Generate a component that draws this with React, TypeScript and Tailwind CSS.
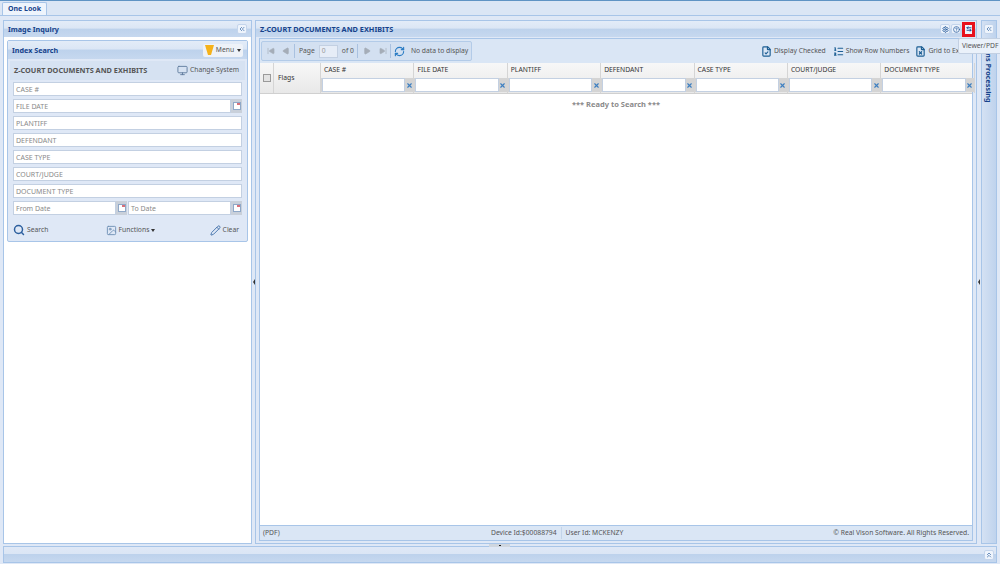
import { ReactNode } from 'react'
import { ChevronsLeft, ChevronsUp, RefreshCw, Search, Pencil, SkipBack, SkipForward, Play, HelpCircle, Settings, ArrowLeftRight, X, ListOrdered, FileCheck, FileX, Monitor, Image } from 'lucide-react'

const headerBar = 'bg-[linear-gradient(#e3ecf8_0%,#dbe6f5_45%,#bdd2ec_50%,#c6d8ef_100%)]'

const columns = ['CASE #', 'FILE DATE', 'PLANTIFF', 'DEFENDANT', 'CASE TYPE', 'COURT/JUDGE', 'DOCUMENT TYPE']
const fields = ['DEFENDANT', 'CASE TYPE', 'COURT/JUDGE', 'DOCUMENT TYPE']

function ToolBtn({ children }: { children: ReactNode }) {
  return (
    <span className="flex h-[10px] w-[10px] items-center justify-center rounded-[2px] border border-[#c4d5ec] bg-[#eef4fc] text-[#2c5f9e]">
      {children}
    </span>
  )
}

function DateBtn() {
  return (
    <span className="flex h-[14px] w-[11px] shrink-0 items-center justify-center bg-[#c9d0da]">
      <span className="relative h-[8px] w-[8px] border border-[#8fa8c8] bg-white">
        <span className="absolute right-0 top-0 h-[2px] w-[3px] bg-[#d8707a]" />
      </span>
    </span>
  )
}

function Field({ label, date, className = '' }: { label: string; date?: boolean; className?: string }) {
  return (
    <div className={`flex h-[14px] items-stretch ${className}`}>
      <div className="flex min-w-0 flex-1 items-center border border-[#c3d0e2] bg-white pl-[2px] text-[7px] leading-none text-[#8a8a8a]">
        {label}
      </div>
      {date && <DateBtn />}
    </div>
  )
}

function Separator({ className = 'mx-[3px]' }: { className?: string }) {
  return <span className={`h-[14px] w-px shrink-0 bg-[#a9c1e0] ${className}`} />
}

export default function App() {
  return (
    <div className="relative flex h-[564px] w-[1000px] flex-col overflow-hidden whitespace-nowrap bg-[#dfe8f6] font-['Noto_Sans',sans-serif] text-[6.75px] text-[#555]">
      {/* Tabs */}
      <div className="flex h-[16px] shrink-0 items-end border-t border-t-[#5f93c4] border-b border-b-[#a8c5e8] bg-[#dbe6f5] pl-[2px]">
        <div className="flex h-[13px] w-[45px] items-center justify-center rounded-t-[2px] border border-b-0 border-[#a8c5e8] bg-[#eef4fc] text-[7px] font-bold text-[#15428b]">
          One Look
        </div>
      </div>

      {/* Main area */}
      <div className="flex h-[530px] shrink-0 bg-[#dfe8f6] pt-[4px] pl-[3px] pr-[3px] pb-[2px]">
        {/* Left panel */}
        <section className="flex w-[249px] shrink-0 flex-col border border-[#a8c5e8] bg-white">
          <div className={`flex h-[16px] shrink-0 items-center justify-between pl-[4px] pr-[4px] text-[7.2px] font-bold text-[#15428b] ${headerBar}`}>
            <span>Image Inquiry</span>
            <ToolBtn><ChevronsLeft size={8} strokeWidth={2} /></ToolBtn>
          </div>
          <div className="px-[3px] pt-[3px]">
            <div className="rounded-[2px] border border-[#a8c5e8] bg-[#dfe8f6]">
              <div className={`flex h-[18px] items-center justify-between pl-[4px] pr-[4px] text-[7.2px] font-bold text-[#15428b] ${headerBar}`}>
                <span>Index Search</span>
                <span className="flex h-[13px] w-[40px] items-center justify-center gap-[2px] rounded-[2px] bg-[#eef2f8] text-[6.75px] font-normal text-[#555]">
                  <svg width="9" height="11" viewBox="0 0 9 11"><path d="M0 0h9L6 10H3z" fill="#f5b21a" /></svg>
                  Menu
                  <span className="ml-[1px] border-x-[2px] border-t-[3px] border-x-transparent border-t-[#333]" />
                </span>
              </div>
              <div className="mx-[2px] mt-[2px] flex h-[19px] items-center justify-between bg-[#d6e2f2] pl-[4px] pr-[6px]">
                <span className="text-[7.3px] font-bold text-[#555]">Z-COURT DOCUMENTS AND EXHIBITS</span>
                <span className="flex items-center gap-[2px]">
                  <Monitor size={11} className="text-[#5f7c9e]" />
                  Change System
                </span>
              </div>
              <div className="flex flex-col gap-[3px] px-[5px] pt-[2px]">
                <Field label="CASE #" />
                <Field label="FILE DATE" date />
                <Field label="PLANTIFF" />
                {fields.map((f) => (
                  <Field key={f} label={f} />
                ))}
                <div className="flex gap-[1px]">
                  <Field label="From Date" date className="w-[114px]" />
                  <Field label="To Date" date className="flex-1" />
                </div>
              </div>
              <div className="mt-[4px] flex h-[22px] items-center justify-between pl-[5px] pr-[8px]">
                <span className="flex items-center gap-[2px]">
                  <Search size={12} strokeWidth={3} className="text-[#2c5f9e]" />
                  Search
                </span>
                <span className="ml-[3px] flex items-center gap-[2px]">
                  <Image size={11} className="text-[#6f8fb5]" />
                  Functions
                  <span className="border-x-[2px] border-t-[3px] border-x-transparent border-t-[#333]" />
                </span>
                <span className="flex items-center gap-[2px]">
                  <Pencil size={11} className="text-[#3f6ea8]" />
                  Clear
                </span>
              </div>
            </div>
          </div>
        </section>

        {/* Splitter */}
        <div className="flex w-[3px] shrink-0 items-center justify-center">
          <span className="border-y-[3px] border-r-[2px] border-y-transparent border-r-[#333]" />
        </div>

        {/* Grid panel */}
        <section className="flex w-[722px] shrink-0 flex-col border border-[#a8c5e8] bg-[#dfe8f6]">
          <div className={`flex h-[16px] shrink-0 items-center justify-between pl-[4px] pr-px text-[7.3px] font-bold text-[#15428b] ${headerBar}`}>
            <span>Z-COURT DOCUMENTS AND EXHIBITS</span>
            <span className="flex items-center">
              <ToolBtn><Settings size={7} strokeWidth={3} /></ToolBtn>
              <span className="ml-[1px]"><ToolBtn><HelpCircle size={7} strokeWidth={2.5} /></ToolBtn></span>
              <span className="ml-[1px] flex h-[15px] w-[13px] items-center justify-center border-[3px] border-[#e8101c] bg-[#eef4fc]">
                <ArrowLeftRight size={6} strokeWidth={3.5} className="text-[#15428b]" />
              </span>
            </span>
          </div>
          <div className="mx-[3px] mt-[1px] mb-[2px] flex min-h-0 flex-1 flex-col border border-[#a8c5e8] bg-white">
            {/* Paging toolbar */}
            <div className="flex h-[24px] shrink-0 items-center justify-between bg-[#dae6f5] pl-px pr-[4px]">
              <div className="flex h-[20px] w-[211px] items-center rounded-[2px] border border-[#b3cbe8] bg-[#d3e0f1] pl-[4px]">
                <SkipBack size={8} className="mx-[1px] text-[#a5adb8]" fill="#a5adb8" />
                <Play size={8} className="ml-[6px] rotate-180 text-[#a5adb8]" fill="#a5adb8" />
                <Separator className="ml-[4px] mr-[4px]" />
                <span>Page</span>
                <span className="mx-[4px] flex h-[13px] w-[19px] items-center border border-[#c3d0e2] bg-[#e6edf7] pl-[2px] text-[#999]">0</span>
                <span>of 0</span>
                <Separator className="ml-[3px] mr-[5px]" />
                <Play size={8} className="text-[#a5adb8]" fill="#a5adb8" />
                <SkipForward size={8} className="ml-[8px] text-[#a5adb8]" fill="#a5adb8" />
                <Separator className="ml-[3px] mr-[3px]" />
                <RefreshCw size={11} strokeWidth={2.5} className="mr-[6px] text-[#2b7cc4]" />
                <span>No data to display</span>
              </div>
              <div className="flex items-center">
                <span className="flex items-center gap-[2px]">
                  <FileCheck size={11} className="text-[#1d5f94]" strokeWidth={2.5} />
                  Display Checked
                </span>
                <span className="ml-[7px] flex items-center gap-[2px]">
                  <ListOrdered size={11} className="text-[#1d5f94]" strokeWidth={2.5} />
                  Show Row Numbers
                </span>
                <span className="ml-[6px] flex items-center gap-[2px]">
                  <FileX size={11} className="text-[#1d5f94]" strokeWidth={2.5} />
                  Grid to Excel
                </span>
              </div>
            </div>

            {/* Column headers */}
            <div className="flex h-[31px] shrink-0 border-b border-[#d0d0d0] bg-[linear-gradient(#f7f7f7,#e8e8e8)] text-[#333]">
              <div className="flex w-[14px] shrink-0 items-center justify-center border-r border-[#d5d5d5]">
                <span className="h-[8px] w-[8px] border border-[#9a9a9a] bg-[#e3e3e3]" />
              </div>
              <div className="flex w-[47px] shrink-0 items-center border-r border-[#d5d5d5] pl-[4px]">Flags</div>
              {columns.map((c) => (
                <div key={c} className="flex w-[93.4px] shrink-0 flex-col border-r border-[#d5d5d5]">
                  <div className="flex h-[15px] items-center pl-[3px]">{c}</div>
                  <div className="flex h-[14px] items-stretch bg-[#d4d4d4] pl-px">
                    <span className="flex-1 border border-[#c3d0e2] bg-white" />
                    <span className="flex w-[8px] items-center justify-center">
                      <X size={7} strokeWidth={4} className="text-[#3d7fc1]" />
                    </span>
                  </div>
                </div>
              ))}
            </div>

            {/* Body */}
            <div className="flex-1 bg-white pt-[5px] text-center text-[7.5px] font-bold text-[#8a8a8a]">
              *** Ready to Search ***
            </div>

            {/* Status bar */}
            <div className="flex h-[15px] shrink-0 items-center border-t border-[#a8c5e8] bg-[#dae6f5] pl-[3px] pr-[3px]">
              <span className="w-[228px]">(PDF)</span>
              <span>Device Id:$00088794</span>
              <span className="mx-[4px] h-[12px] w-px bg-[#c3d4ea]" />
              <span>User Id: MCKENZY</span>
              <span className="ml-auto">© Real Vison Software. All Rights Reserved.</span>
            </div>
          </div>
        </section>

        {/* Splitter */}
        <div className="flex w-[4px] shrink-0 items-center justify-center">
          <span className="border-y-[3px] border-r-[2px] border-y-transparent border-r-[#333]" />
        </div>

        {/* Collapsed right panel */}
        <aside className="flex w-[16px] shrink-0 flex-col items-center border border-[#a8c5e8] bg-[linear-gradient(90deg,#d4e1f3,#bfd3ed)] pt-[3px]">
          <ToolBtn><ChevronsLeft size={8} strokeWidth={2} /></ToolBtn>
          <span className="mt-[5px] text-[7.3px] font-bold text-[#15428b] [writing-mode:vertical-rl]">Forms Processing</span>
        </aside>
      </div>

      {/* Bottom collapsed panel */}
      <div className="mx-[3px] flex h-[17px] shrink-0 items-center justify-end border border-[#a8c5e8] bg-[linear-gradient(#dfe8f6_0%,#dbe6f5_45%,#bdd2ec_50%,#c6d8ef_100%)] pr-[2px]">
        <ToolBtn><ChevronsUp size={8} strokeWidth={2} /></ToolBtn>
      </div>

      {/* Splitter handle */}
      <span className="absolute left-[489px] top-[544px] flex h-[3px] w-[21px] items-center justify-center bg-[#cfd6df]">
        <span className="h-px w-[2px] bg-[#222]" />
      </span>

      {/* Tooltip */}
      <div className="absolute left-[958px] top-[38px] flex h-[16px] w-[44px] items-center rounded-[2px] border border-[#c3d0e2] bg-[#eaf1fa] pl-[3px] text-[#555]">
        Viewer/PDF
      </div>
    </div>
  )
}
